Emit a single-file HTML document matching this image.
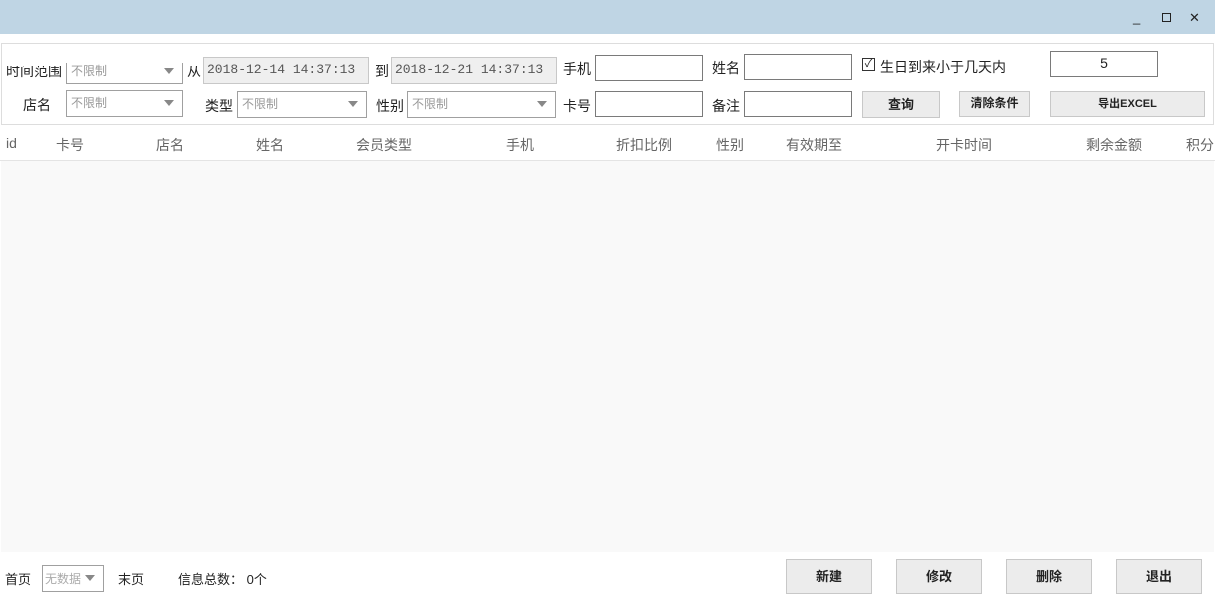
<!DOCTYPE html>
<html><head><meta charset="utf-8"><style>
*{margin:0;padding:0;box-sizing:border-box}
body{width:1215px;height:600px;background:#fff;position:relative;overflow:hidden;font-family:"Liberation Sans","Noto Sans CJK SC",sans-serif;font-size:14px;color:#222}
.a{position:absolute;white-space:nowrap}
.box{position:absolute;border:1px solid #7a7a7a;background:#fff}
.dd{position:absolute;border:1px solid #a0a0a0;background:#fff;color:#999;font-size:12px;padding:3px 4px;white-space:nowrap}
.dd:after{content:"";position:absolute;right:8px;top:9px;border-left:5px solid transparent;border-right:5px solid transparent;border-top:6px solid #888}
.dt{position:absolute;border:1px solid #c8c8c8;background:#efefef;color:#555;font-family:"Liberation Mono","Noto Sans CJK SC",monospace;font-size:13px;padding:4px 3px;overflow:hidden;white-space:nowrap}
.btn{position:absolute;border:1px solid #c8c8c8;background:#ececec;font-weight:bold;font-size:12px;text-align:center}
.hd{position:absolute;top:135px;color:#666;font-size:14px}
</style></head><body>
<div class="a" style="left:0;top:0;width:1215px;height:34px;background:#bfd5e4"></div>
<div class="a" style="left:1133px;top:10px;font-size:13px">_</div>
<div class="a" style="left:1162px;top:13px;width:9px;height:9px;border:1px solid #222"></div>
<div class="a" style="left:1189px;top:10px;font-size:13px">✕</div>
<div class="a" style="left:1px;top:43px;width:1213px;height:82px;border:1px solid #ddd"></div>
<div class="a" style="left:6px;top:66px;height:14px;overflow:hidden"><div style="margin-top:-5px">时间范围</div></div>
<div class="a" style="left:66px;top:63px;width:117px;height:21px;overflow:hidden"><div class="dd" style="left:0;top:-5px;width:117px;height:26px">不限制</div></div>
<div class="a" style="left:187px;top:66px;height:14px;overflow:hidden"><div style="margin-top:-5px">从</div></div>
<div class="dt" style="left:203px;top:57px;width:166px;height:27px">2018-12-14 14:37:13</div>
<div class="a" style="left:375px;top:61px">到</div>
<div class="dt" style="left:391px;top:57px;width:166px;height:27px">2018-12-21 14:37:13</div>
<div class="a" style="left:563px;top:59px">手机</div>
<div class="box" style="left:595px;top:55px;width:108px;height:26px"></div>
<div class="a" style="left:712px;top:58px">姓名</div>
<div class="box" style="left:744px;top:54px;width:108px;height:26px"></div>
<div class="a" style="left:862px;top:58px;width:13px;height:13px;border:1px solid #333;font-size:11px;line-height:11px;text-align:center">✓</div>
<div class="a" style="left:880px;top:57px">生日到来小于几天内</div>
<div class="box" style="left:1050px;top:51px;width:108px;height:26px;text-align:center;line-height:22px">5</div>
<div class="a" style="left:23px;top:95px">店名</div>
<div class="dd" style="left:66px;top:90px;width:117px;height:27px">不限制</div>
<div class="a" style="left:205px;top:96px">类型</div>
<div class="dd" style="left:237px;top:91px;width:130px;height:27px">不限制</div>
<div class="a" style="left:376px;top:96px">性别</div>
<div class="dd" style="left:407px;top:91px;width:149px;height:27px">不限制</div>
<div class="a" style="left:563px;top:96px">卡号</div>
<div class="box" style="left:595px;top:91px;width:108px;height:26px"></div>
<div class="a" style="left:712px;top:96px">备注</div>
<div class="box" style="left:744px;top:91px;width:108px;height:26px"></div>
<div class="btn" style="left:862px;top:91px;width:78px;height:27px;line-height:25px;font-size:13px">查询</div>
<div class="btn" style="left:959px;top:91px;width:71px;height:26px;line-height:22px">清除条件</div>
<div class="btn" style="left:1050px;top:91px;width:155px;height:26px;line-height:24px;font-size:11px">导出EXCEL</div>
<div class="a" style="left:0;top:160px;width:1215px;height:1px;background:#e4e4e4"></div>
<div class="a" style="left:1px;top:161px;width:1213px;height:391px;background:#f9f9f9"></div>
<div class="hd" style="left:6px">id</div>
<div class="hd" style="left:56px">卡号</div>
<div class="hd" style="left:156px">店名</div>
<div class="hd" style="left:256px">姓名</div>
<div class="hd" style="left:356px">会员类型</div>
<div class="hd" style="left:506px">手机</div>
<div class="hd" style="left:616px">折扣比例</div>
<div class="hd" style="left:716px">性别</div>
<div class="hd" style="left:786px">有效期至</div>
<div class="hd" style="left:936px">开卡时间</div>
<div class="hd" style="left:1086px">剩余金额</div>
<div class="hd" style="left:1186px">积分</div>
<div class="a" style="left:5px;top:569px;font-size:13px">首页</div>
<div class="dd" style="left:42px;top:565px;width:62px;height:27px;color:#aaa;padding:4px 2px">无数据</div>
<div class="a" style="left:118px;top:569px;font-size:13px">末页</div>
<div class="a" style="left:178px;top:569px;font-size:13px">信息总数：&nbsp;0个</div>
<div class="btn" style="left:786px;top:559px;width:86px;height:35px;line-height:33px;font-size:13px">新建</div>
<div class="btn" style="left:896px;top:559px;width:86px;height:35px;line-height:33px;font-size:13px">修改</div>
<div class="btn" style="left:1006px;top:559px;width:86px;height:35px;line-height:33px;font-size:13px">删除</div>
<div class="btn" style="left:1116px;top:559px;width:86px;height:35px;line-height:33px;font-size:13px">退出</div>
</body></html>
